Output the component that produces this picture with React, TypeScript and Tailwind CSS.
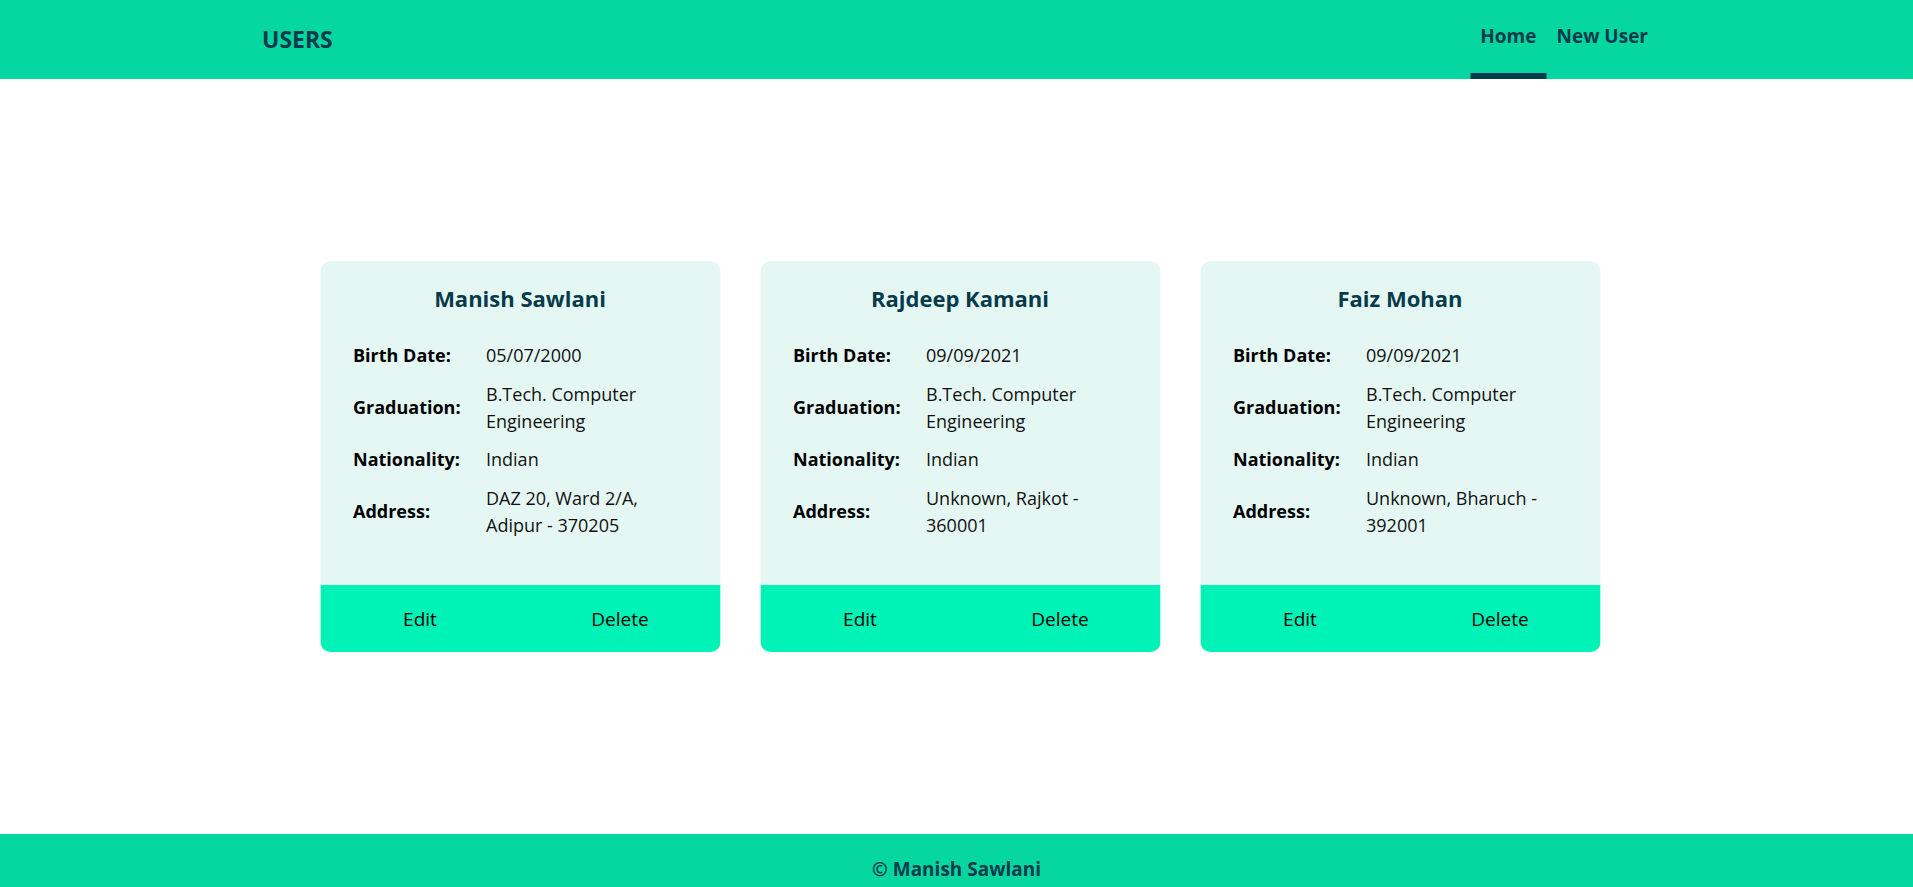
const users = [
  {
    name: "Manish Sawlani",
    birthDate: "05/07/2000",
    graduation: "B.Tech. Computer Engineering",
    nationality: "Indian",
    address: "DAZ 20, Ward 2/A, Adipur - 370205",
  },
  {
    name: "Rajdeep Kamani",
    birthDate: "09/09/2021",
    graduation: "B.Tech. Computer Engineering",
    nationality: "Indian",
    address: "Unknown, Rajkot - 360001",
  },
  {
    name: "Faiz Mohan",
    birthDate: "09/09/2021",
    graduation: "B.Tech. Computer Engineering",
    nationality: "Indian",
    address: "Unknown, Bharuch - 392001",
  },
];

export default function App() {
  return (
    <div className="min-h-screen bg-white font-['Open_Sans',sans-serif] text-black">
      <header className="h-[79px] bg-[#06d6a0]">
        <nav className="mx-auto flex h-full w-[1396px] translate-x-[3.5px] items-center justify-between">
          <span className="text-[23px] font-bold text-[#073b4c]">USERS</span>
          <div className="flex h-full">
            <NavLink label="Home" active />
            <NavLink label="New User" />
          </div>
        </nav>
      </header>

      <main className="h-[755px] pt-[182px]">
        <div className="flex translate-x-[3.5px] justify-center gap-10">
          {users.map((u) => (
            <UserCard key={u.name} {...u} />
          ))}
        </div>
      </main>

      <footer className="flex h-[79px] items-center justify-center bg-[#06d6a0]">
        <span className="pb-[8px] text-[19px] font-bold text-[#073b4c]">© Manish Sawlani</span>
      </footer>
    </div>
  );
}

function NavLink({ label, active }: { label: string; active?: boolean }) {
  return (
    <a
      href="#"
      className={
        active
          ? "flex h-full items-center border-b-[6px] border-[#073b4c] px-[10px] pt-[6px] text-[19px] font-bold text-[#073b4c]"
          : "flex h-full items-center border-b-[6px] border-transparent px-[10px] pt-[6px] text-[19px] font-bold text-[#073b4c]"
      }
    >
      <span className="-translate-y-[3px]">{label}</span>
    </a>
  );
}

function UserCard({
  name,
  birthDate,
  graduation,
  nationality,
  address,
}: {
  name: string;
  birthDate: string;
  graduation: string;
  nationality: string;
  address: string;
}) {
  return (
    <div className="w-[400px] overflow-hidden rounded-[10px] bg-[#e5f7f2]">
      <div className="px-[33px] pb-[46px] pt-[22px]">
        <h2 className="text-center text-[22px] font-bold leading-[30px] text-[#073b4c]">{name}</h2>
        <div className="mt-[29px] grid grid-cols-[133px_201px] items-center gap-y-[11.5px] text-[18px] leading-[27px]">
          <Row label="Birth Date:" value={birthDate} />
          <Row label="Graduation:" value={graduation} />
          <Row label="Nationality:" value={nationality} />
          <Row label="Address:" value={address} />
        </div>
      </div>
      <div className="flex h-[67px] bg-[#00f3b6]">
        <button className="flex-1 pt-[2px] text-[19px] font-medium text-black">Edit</button>
        <button className="flex-1 pt-[2px] text-[19px] font-medium text-black">Delete</button>
      </div>
    </div>
  );
}

function Row({ label, value }: { label: string; value: string }) {
  return (
    <>
      <span className="font-bold">{label}</span>
      <span className="text-[#111]">{value}</span>
    </>
  );
}
